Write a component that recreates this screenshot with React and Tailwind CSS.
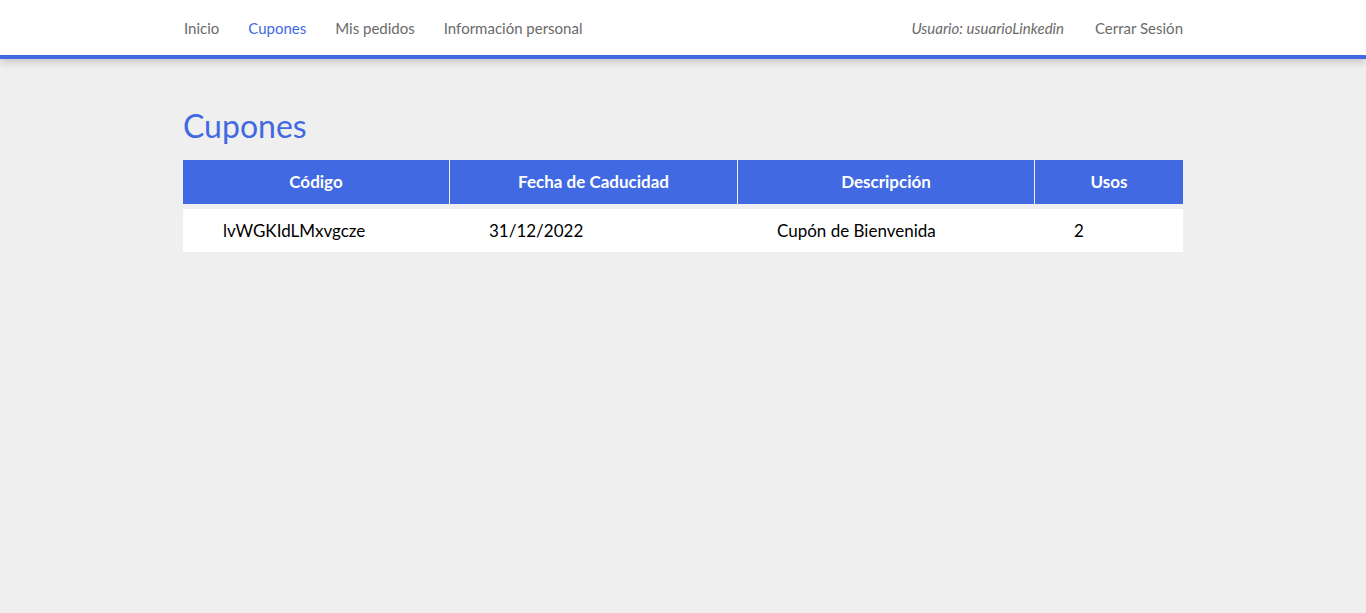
export default function App() {
  const font = { fontFamily: '"Source Sans Pro", Lato, "Noto Sans", sans-serif' };
  return (
    <div className="min-h-[613px] bg-[#efefef]" style={font}>
      <header className="bg-white border-b-[4px] border-[#4169e1] shadow-[0_3px_8px_rgba(0,0,0,0.18)]">
        <div className="w-[1000px] mx-auto h-[55px] pt-[2px] flex items-center justify-between text-[15px] text-[#6a6a6a]">
          <nav className="flex items-center gap-[29px] pl-px">
            <span>Inicio</span>
            <span className="text-[#4169e1]">Cupones</span>
            <span>Mis pedidos</span>
            <span>Información personal</span>
          </nav>
          <div className="flex items-center gap-[31px]">
            <span className="italic">Usuario: usuarioLinkedin</span>
            <span>Cerrar Sesión</span>
          </div>
        </div>
      </header>
      <main className="w-[1000px] mx-auto pt-[47px]">
        <h1 className="text-[32px] leading-[40px] text-[#4169e1] mb-[14px]">Cupones</h1>
        <div className="grid grid-cols-[266px_287px_296px_148px] gap-x-px gap-y-[5px] text-[17px]">
          <div className="bg-[#4169e1] h-[44px] flex items-center justify-center font-bold text-white">Código</div>
          <div className="bg-[#4169e1] h-[44px] flex items-center justify-center font-bold text-white">Fecha de Caducidad</div>
          <div className="bg-[#4169e1] h-[44px] flex items-center justify-center font-bold text-white">Descripción</div>
          <div className="bg-[#4169e1] h-[44px] flex items-center justify-center font-bold text-white">Usos</div>
          <div className="col-span-4 bg-white h-[43px] grid grid-cols-[267px_288px_297px_148px] items-center text-black">
            <span className="pl-[40px]">lvWGKIdLMxvgcze</span>
            <span className="pl-[39px]">31/12/2022</span>
            <span className="pl-[39px]">Cupón de Bienvenida</span>
            <span className="pl-[39px]">2</span>
          </div>
        </div>
      </main>
    </div>
  );
}
